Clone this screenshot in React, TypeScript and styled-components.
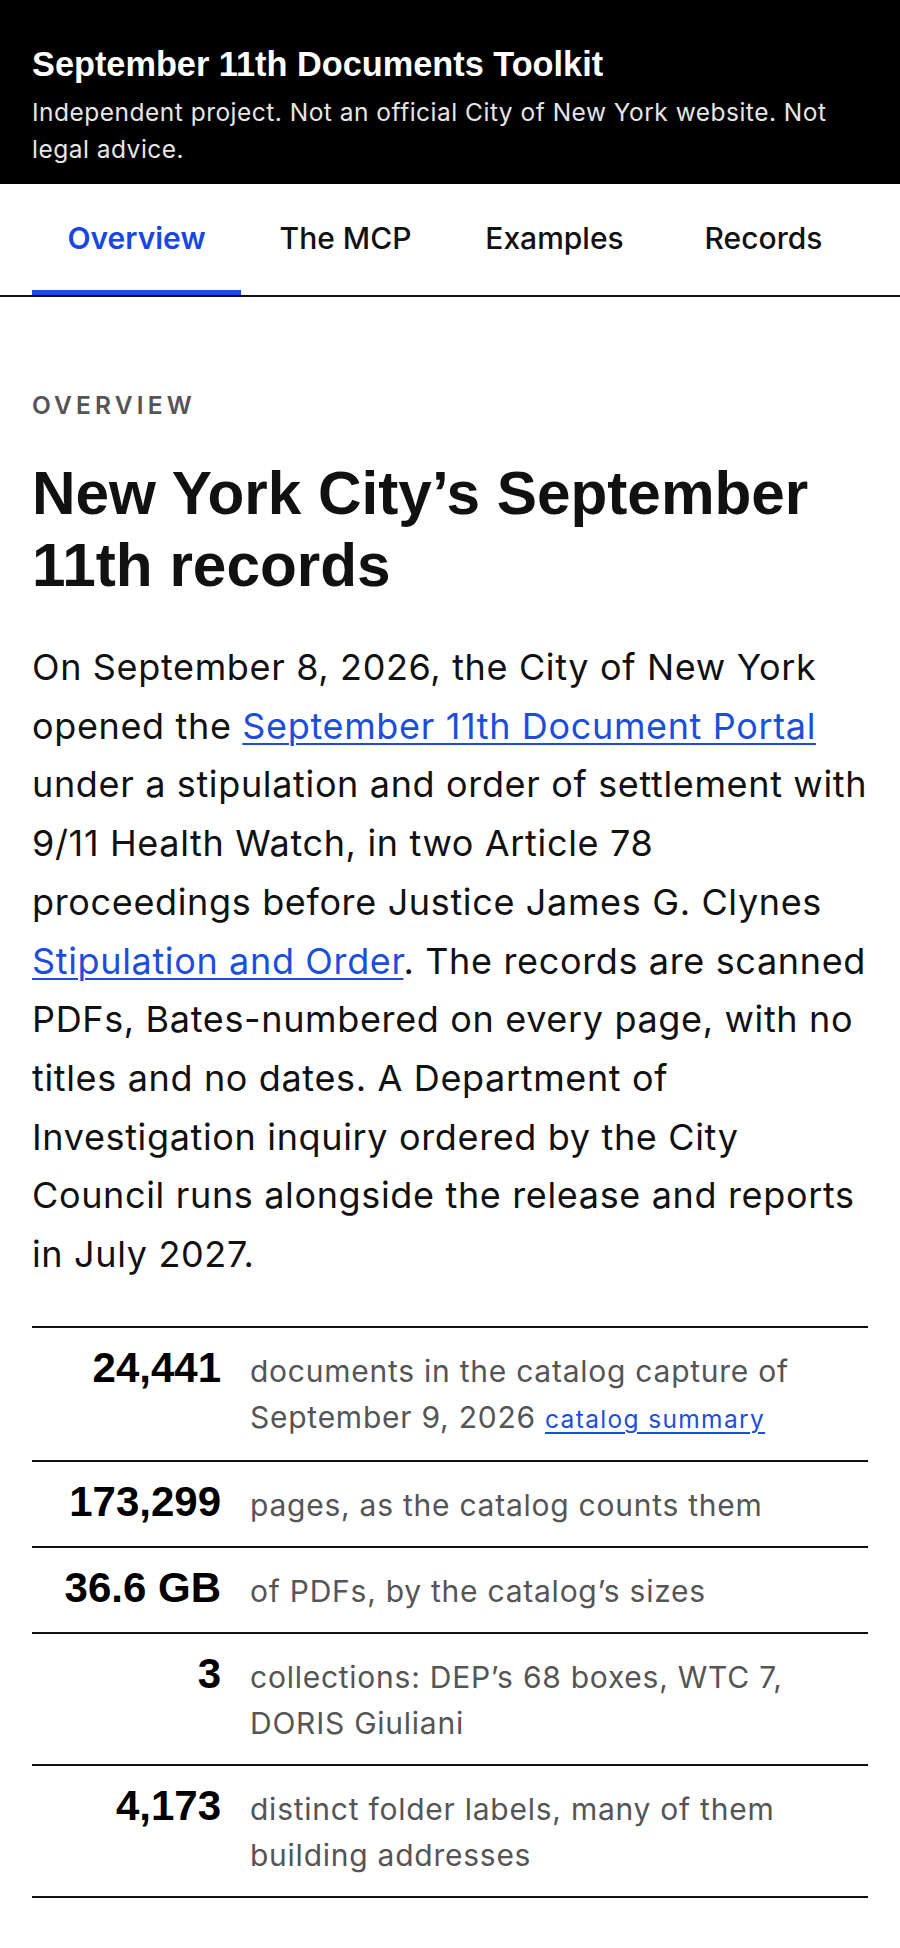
import React from "react";
import styled, { createGlobalStyle } from "styled-components";

const GlobalStyle = createGlobalStyle`
  body {
    margin: 0;
    background: #ffffff;
    color: #111111;
    font-family: Inter, "Noto Sans", sans-serif;
  }
  * {
    box-sizing: border-box;
  }
`;

const Masthead = styled.header`
  background: #000000;
  color: #ffffff;
  padding: 44px 32px 16px;
`;

const SiteTitle = styled.div`
  font-family: "Liberation Sans", Arial, sans-serif;
  font-weight: 700;
  font-size: 34.3px;
  line-height: 41px;
`;

const Disclaimer = styled.p`
  margin: 9px 0 0;
  font-size: 24.5px;
  letter-spacing: 0.02em;
  line-height: 37px;
  color: #e6e6e6;
`;

const TabBar = styled.nav`
  display: grid;
  grid-template-columns: repeat(4, 1fr);
  padding: 0 32px;
  border-bottom: 2px solid #111111;
`;

const Tab = styled.a<{ $active?: boolean }>`
  display: flex;
  align-items: center;
  justify-content: center;
  height: 111px;
  padding-top: 2px;
  font-size: 30px;
  font-weight: ${({ $active }) => ($active ? 600 : 500)};
  color: ${({ $active }) => ($active ? "#1a47e0" : "#111111")};
  text-decoration: none;
  border-bottom: 5px solid ${({ $active }) => ($active ? "#1a4be6" : "transparent")};
`;

const Main = styled.main`
  padding: 96px 32px 60px;
`;

const Eyebrow = styled.div`
  font-size: 24.5px;
  line-height: 24px;
  font-weight: 600;
  letter-spacing: 0.17em;
  text-transform: uppercase;
  color: #555555;
`;

const Heading = styled.h1`
  margin: 40px 0 0;
  font-family: "Liberation Sans", Arial, sans-serif;
  font-weight: 700;
  font-size: 60.3px;
  line-height: 72px;
`;

const Lede = styled.p`
  margin: 37px 0 0;
  font-size: 36px;
  letter-spacing: 0.018em;
  line-height: 58.7px;
  color: #111111;
`;

const Link = styled.a<{ $small?: boolean }>`
  color: #1d4ed8;
  text-decoration: underline;
  text-underline-offset: 4px;
  text-decoration-thickness: 2px;
  font-size: ${({ $small }) => ($small ? "24.5px" : "inherit")};
  letter-spacing: ${({ $small }) => ($small ? "0.055em" : "inherit")};
`;

const Stats = styled.dl`
  margin: 42px 0 0;
  border-bottom: 2px solid #111111;
`;

const StatRow = styled.div`
  display: grid;
  grid-template-columns: 189px 1fr;
  column-gap: 29px;
  align-items: baseline;
  padding: 17px 0 18px;
  border-top: 2px solid #111111;
`;

const StatValue = styled.dt`
  margin: 0;
  text-align: right;
  font-family: "Liberation Sans", Arial, sans-serif;
  font-weight: 700;
  font-size: 42px;
  line-height: 46px;
  color: #000000;
`;

const StatLabel = styled.dd`
  margin: 0;
  font-size: 30px;
  letter-spacing: 0.025em;
  line-height: 46px;
  color: #555555;
`;

const tabs = ["Overview", "The MCP", "Examples", "Records"];

const stats: { value: string; label: React.ReactNode }[] = [
  {
    value: "24,441",
    label: (
      <>
        documents in the catalog capture of September 9, 2026{" "}
        <Link $small href="#summary">
          catalog summary
        </Link>
      </>
    ),
  },
  { value: "173,299", label: "pages, as the catalog counts them" },
  { value: "36.6 GB", label: "of PDFs, by the catalog\u2019s sizes" },
  { value: "3", label: "collections: DEP\u2019s 68 boxes, WTC 7, DORIS Giuliani" },
  { value: "4,173", label: "distinct folder labels, many of them building addresses" },
];

export default function App() {
  return (
    <>
      <GlobalStyle />
      <Masthead>
        <SiteTitle>September 11th Documents Toolkit</SiteTitle>
        <Disclaimer>
          Independent project. Not an official City of New York website. Not legal advice.
        </Disclaimer>
      </Masthead>
      <TabBar>
        {tabs.map((t, i) => (
          <Tab key={t} href="#" $active={i === 0}>
            {t}
          </Tab>
        ))}
      </TabBar>
      <Main>
        <Eyebrow>Overview</Eyebrow>
        <Heading>New York City&rsquo;s September 11th records</Heading>
        <Lede>
          On September 8, 2026, the City of New York opened the{" "}
          <Link href="#portal">September 11th Document Portal</Link> under a stipulation and
          order of settlement with 9/11 Health Watch, in two Article 78 proceedings before
          Justice James G. Clynes <Link href="#stipulation">Stipulation and Order</Link>. The
          records are scanned PDFs, Bates-numbered on every page, with no titles and no dates. A
          Department of Investigation inquiry ordered by the City Council runs alongside the
          release and reports in July 2027.
        </Lede>
        <Stats>
          {stats.map((s) => (
            <StatRow key={s.value}>
              <StatValue>{s.value}</StatValue>
              <StatLabel>{s.label}</StatLabel>
            </StatRow>
          ))}
        </Stats>
      </Main>
    </>
  );
}
